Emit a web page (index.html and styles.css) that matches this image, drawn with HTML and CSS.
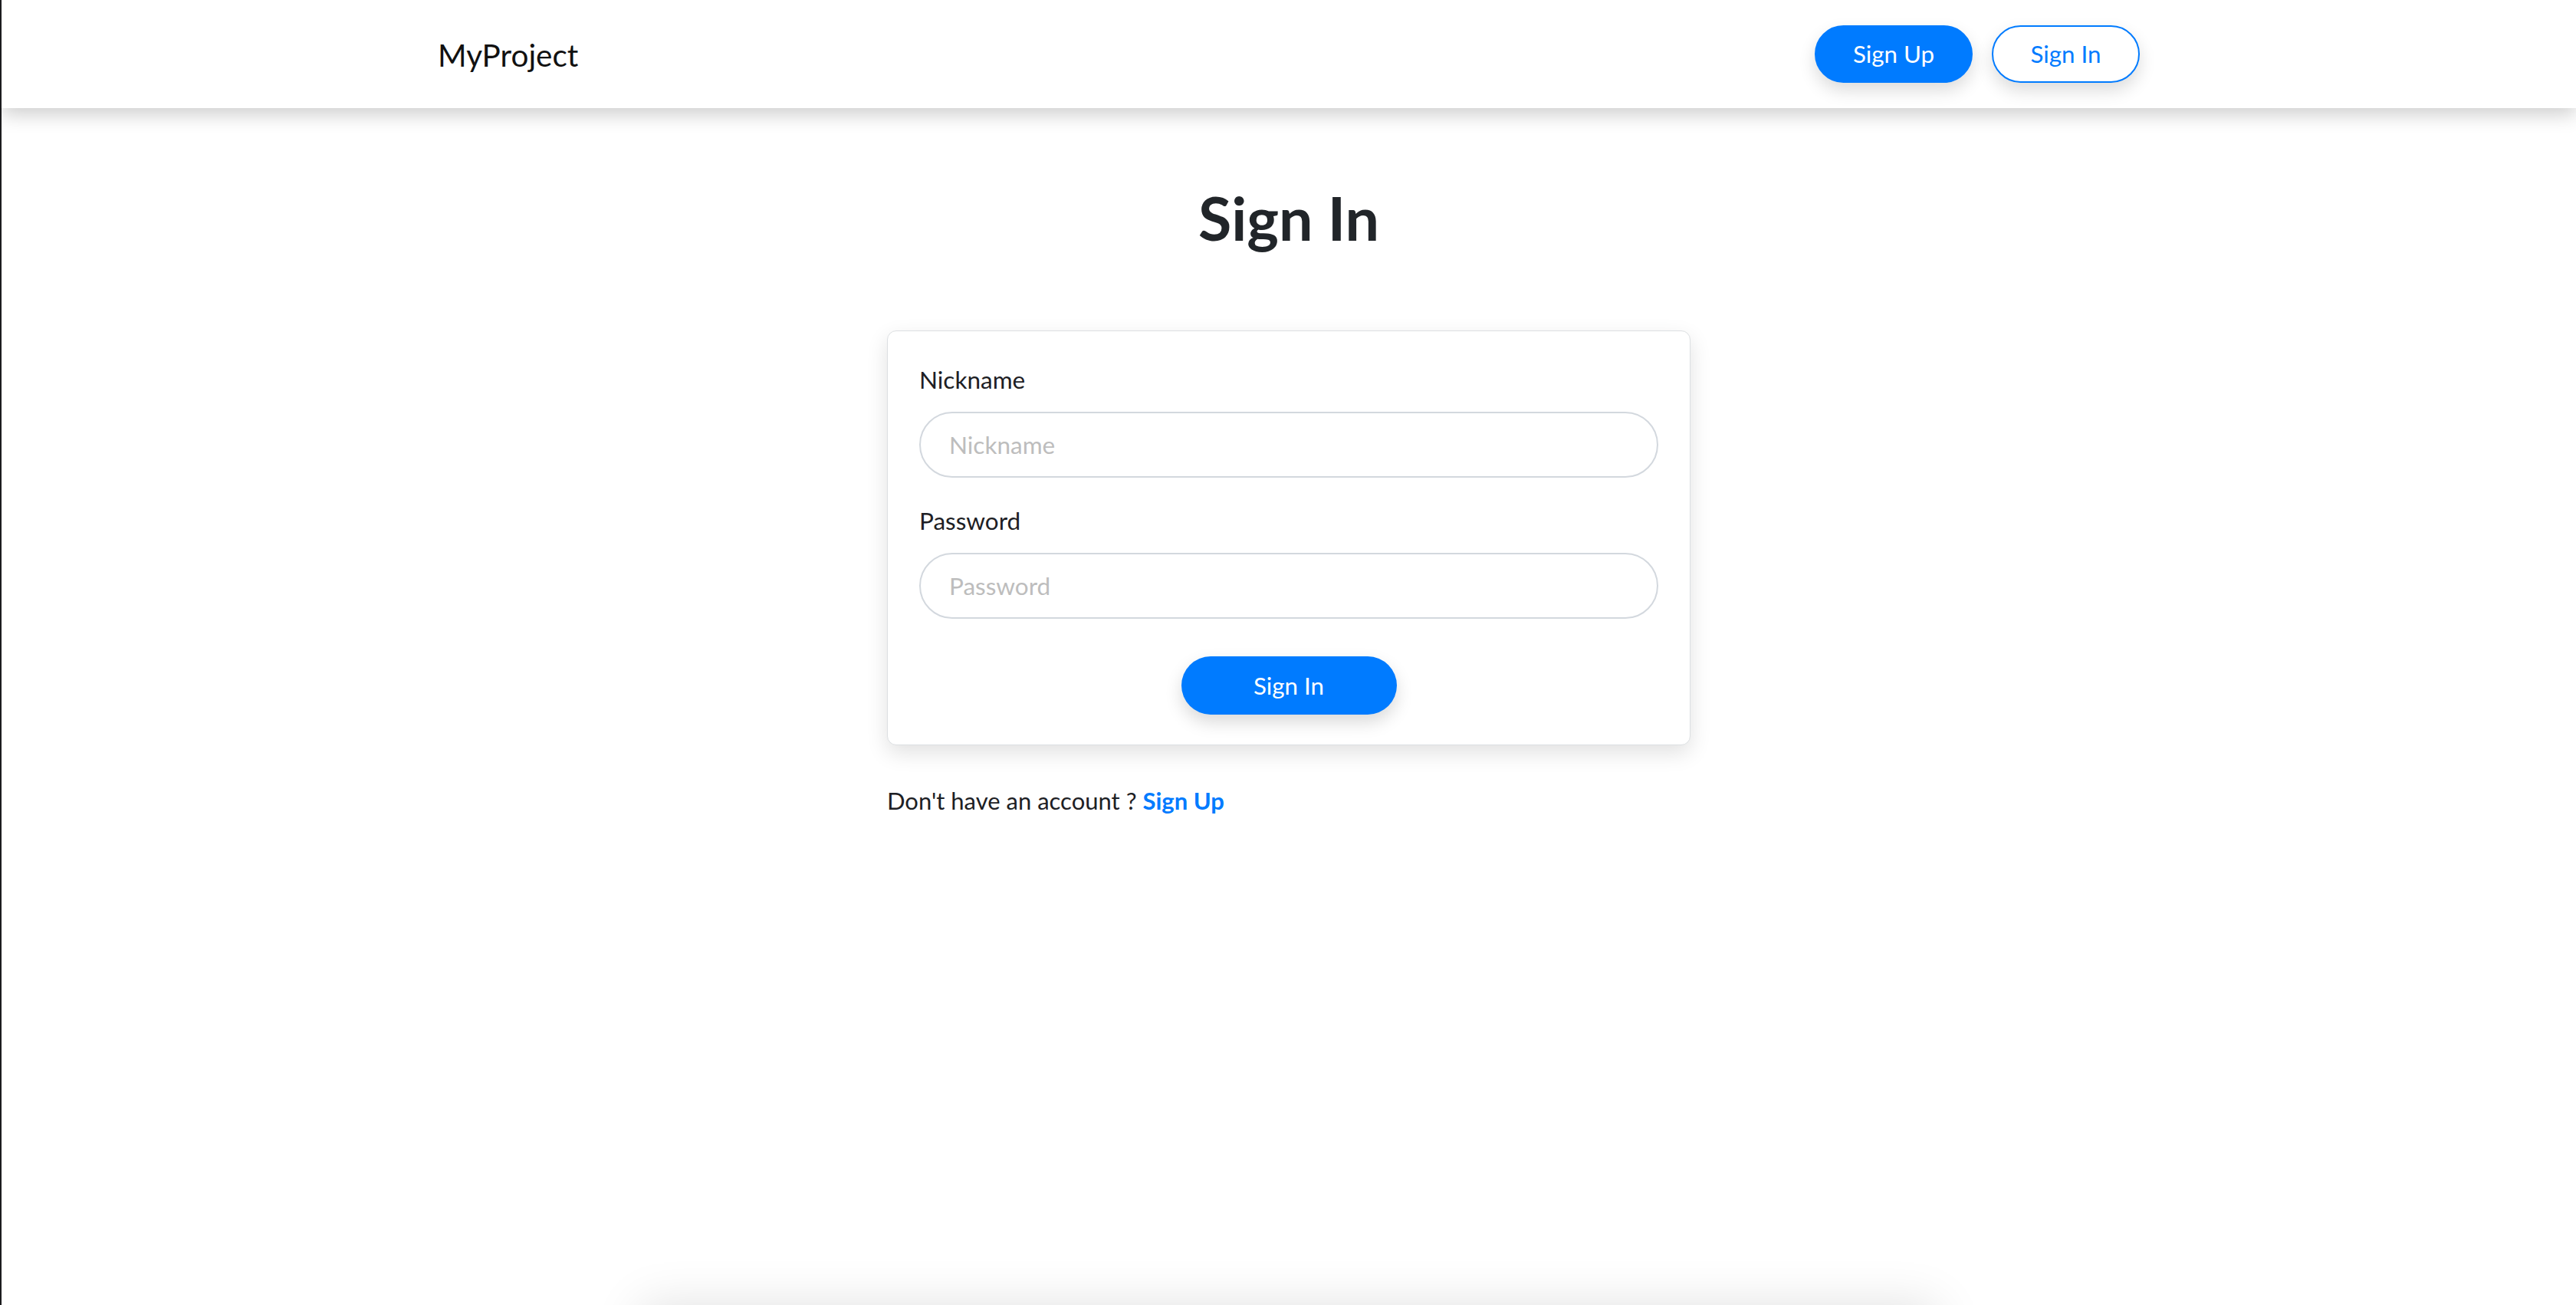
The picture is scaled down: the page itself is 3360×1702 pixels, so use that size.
FILE: index.html
```html
<!DOCTYPE html>
<html lang="en">
<head>
<meta charset="utf-8">
<title>MyProject - Sign In</title>
<link rel="stylesheet" href="styles.css">
</head>
<body>
<div class="page">
  <header class="topbar">
    <div class="topbar-inner">
      <a class="brand" href="#">MyProject</a>
      <nav class="nav-actions">
        <a class="btn btn-solid" href="#">Sign Up</a>
        <a class="btn btn-outline" href="#">Sign In</a>
      </nav>
    </div>
  </header>
  <main class="main">
    <h1 class="title">Sign In</h1>
    <div class="form-wrap">
      <form class="card">
        <div class="group">
          <label class="label" for="nick">Nickname</label>
          <input class="input" id="nick" type="text" placeholder="Nickname">
        </div>
        <div class="group last">
          <label class="label" for="pass">Password</label>
          <input class="input" id="pass" type="password" placeholder="Password">
        </div>
        <div class="submit-row">
          <button class="submit" type="button">Sign In</button>
        </div>
      </form>
      <p class="alt">Don't have an account ? <a class="alt-link" href="#">Sign Up</a></p>
    </div>
  </main>
</div>
<footer class="footer"></footer>
</body>
</html>
```
FILE: styles.css
```css
* { box-sizing: border-box; }
html, body { margin: 0; padding: 0; }
body {
  border-left: 2px solid #1c1c1e;
  background: #ffffff;
  color: #212529;
  font-family: Lato, "Open Sans", "Liberation Sans", sans-serif;
  font-size: 31.5px;
  line-height: 50.4px;
}
.page { min-height: 100vh; }
.topbar {
  height: 141px;
  background: #ffffff;
  box-shadow: 0 8px 24px rgba(0, 0, 0, 0.2);
  position: relative;
  z-index: 2;
}
.topbar-inner {
  width: 2220px;
  height: 100%;
  margin: 0 auto;
  display: flex;
  align-items: center;
  justify-content: space-between;
}
.brand {
  font-size: 40.5px;
  line-height: 63px;
  color: #111111;
  text-decoration: none;
  margin-top: 2px;
}
.nav-actions {
  display: flex;
  gap: 25px;
  align-items: center;
}
.btn {
  display: flex;
  align-items: center;
  justify-content: center;
  height: 75px;
  border-radius: 38px;
  font-size: 31.3px;
  text-decoration: none;
  box-shadow: 0 10px 22px rgba(0, 0, 0, 0.14);
}
.btn-solid {
  width: 206px;
  background: #007bff;
  color: #ffffff;
  border: 2px solid #007bff;
}
.btn-outline {
  width: 193px;
  background: #ffffff;
  color: #007bff;
  border: 2px solid #007bff;
}
.main {
  padding-top: 93px;
}
.title {
  margin: 0 0 96px;
  text-align: center;
  font-size: 79px;
  font-weight: 700;
  line-height: 100.8px;
  color: #212529;
}
.form-wrap {
  width: 1048px;
  margin: 0 auto;
}
.card {
  display: block;
  margin: 0;
  background: #ffffff;
  border: 1px solid #dcdfe2;
  border-radius: 12px;
  padding: 38px 41px 39px;
  box-shadow: 0 10px 28px rgba(0, 0, 0, 0.12);
}
.group { margin-bottom: 31px; }
.group.last { margin-bottom: 49px; }
.label {
  display: block;
  font-size: 31.5px;
  line-height: 50.4px;
  margin-bottom: 16.6px;
  color: #1d2024;
}
.input {
  display: block;
  width: 100%;
  height: 86px;
  border: 2px solid #d3d8de;
  border-radius: 43px;
  padding: 0 37px;
  font-family: Lato, "Open Sans", "Liberation Sans", sans-serif;
  font-size: 31.5px;
  color: #495057;
  background: #ffffff;
  outline: none;
}
.input::placeholder { color: #bdbdbd; opacity: 1; }
.submit-row {
  display: flex;
  justify-content: center;
}
.submit {
  width: 281px;
  height: 76px;
  border: none;
  border-radius: 38px;
  background: #007bff;
  color: #ffffff;
  font-family: Lato, "Open Sans", "Liberation Sans", sans-serif;
  font-size: 31.3px;
  box-shadow: 0 10px 22px rgba(0, 0, 0, 0.15);
  cursor: pointer;
}
.alt {
  margin: 47px 0 0;
  font-size: 31px;
  line-height: 50.4px;
  color: #1d2024;
}
.alt-link {
  color: #007bff;
  font-weight: 700;
  text-decoration: none;
}
.footer {
  width: 1690px;
  height: 300px;
  margin: 0 auto;
  background: #ffffff;
  box-shadow: 0 0 60px rgba(0, 0, 0, 0.12);
}
```
